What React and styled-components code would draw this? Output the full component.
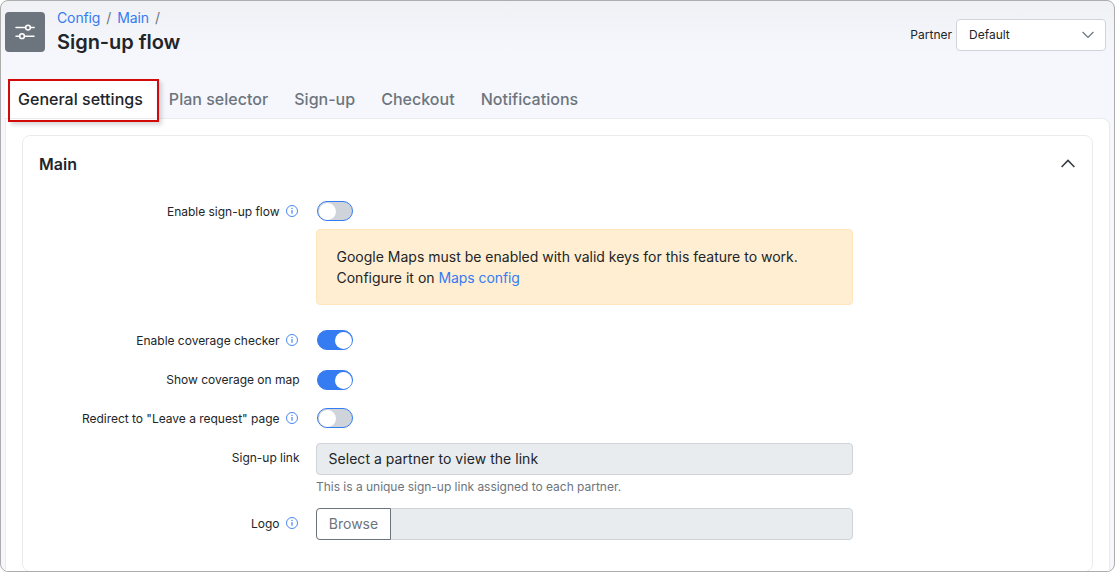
import { useState } from 'react';
import styled, { createGlobalStyle } from 'styled-components';

const tabs = ['General settings', 'Plan selector', 'Sign-up', 'Checkout', 'Notifications'];

const InfoIcon = () => (
  <InfoSvg viewBox='0 0 12 12' width='12' height='12' fill='none'>
    <circle cx='6' cy='6' r='5.5' stroke='#357bf2' strokeWidth='0.9' />
    <path d='M6 5v3.8' stroke='#357bf2' strokeWidth='1.1' />
    <circle cx='6' cy='3.4' r='0.7' fill='#357bf2' />
  </InfoSvg>
);

const SlidersIcon = () => (
  <svg viewBox='0 0 20 18' width='20' height='18' fill='none' stroke='#fff' strokeWidth='1.5'>
    <path d='M1 4.6h9.6M15.4 4.6h3.8M1 13.2h3.8M9.4 13.2h9.6' strokeLinecap='round' />
    <circle cx='13' cy='4.6' r='2.4' />
    <circle cx='7' cy='13.2' r='2.4' />
  </svg>
);

const Field = ({ label, info, top, labelTop, children }) => (
  <Row $top={top}>
    <Label $top={labelTop}>
      {label}
      {info && <InfoIcon />}
    </Label>
    <Control>{children}</Control>
  </Row>
);

function App() {
  const [active, setActive] = useState(tabs[0]);
  const [values, setValues] = useState({ flow: false, coverage: true, map: true, redirect: false });

  const toggle = (name) => {
    setValues({ ...values, [name]: !values[name] });
  };

  return (
    <>
      <GlobalStyle />
      <Frame>
        <Header>
          <PageIcon>
            <SlidersIcon />
          </PageIcon>
          <Heading>
            <Breadcrumb>
              <a>Config</a>
              <span>/</span>
              <a>Main</a>
              <span>/</span>
            </Breadcrumb>
            <Title>Sign-up flow</Title>
          </Heading>
          <Partner>
            <span>Partner</span>
            <Select>
              <span>Default</span>
              <svg width='12' height='8' viewBox='0 0 12 8' fill='none' stroke='#6b747b' strokeWidth='1.2'>
                <path d='M0.6 1l5.4 5.5L11.4 1' />
              </svg>
            </Select>
          </Partner>
        </Header>

        <Tabs>
          {tabs.map((tab) => (
            <Tab key={tab} $active={tab === active} onClick={() => setActive(tab)}>
              {tab}
            </Tab>
          ))}
          <Highlight />
        </Tabs>

        <Panel>
          <Card>
            <CardHeader>
              Main
              <svg width='14' height='9' viewBox='0 0 14 9' fill='none' stroke='#343a40' strokeWidth='1.5'>
                <path d='M0.6 8L7 1.4 13.4 8' />
              </svg>
            </CardHeader>

            <Field label='Enable sign-up flow' info top={18} labelTop={2}>
              <Switch $on={values.flow} onClick={() => toggle('flow')} />
              <Alert>
                Google Maps must be enabled with valid keys for this feature to work.
                <br />
                Configure it on <a>Maps config</a>
              </Alert>
            </Field>
            <Field label='Enable coverage checker' info top={25} labelTop={2}>
              <Switch $on={values.coverage} onClick={() => toggle('coverage')} />
            </Field>
            <Field label='Show coverage on map' top={20} labelTop={1}>
              <Switch $on={values.map} onClick={() => toggle('map')} />
            </Field>
            <Field label='Redirect to "Leave a request" page' info top={18} labelTop={2}>
              <Switch $on={values.redirect} onClick={() => toggle('redirect')} />
            </Field>
            <Field label='Sign-up link' top={15} labelTop={6}>
              <LinkBox>Select a partner to view the link</LinkBox>
              <Help>This is a unique sign-up link assigned to each partner.</Help>
            </Field>
            <Field label='Logo' info top={12} labelTop={7}>
              <FileBox>
                <Browse type='button'>Browse</Browse>
              </FileBox>
            </Field>
          </Card>
        </Panel>
      </Frame>
    </>
  );
}

const GlobalStyle = createGlobalStyle`
  * {
    box-sizing: border-box;
  }
  body {
    margin: 0;
    background: #fff;
    font-family: Inter, 'Liberation Sans', sans-serif;
    color: #212529;
  }
  a {
    color: #357bf2;
    cursor: pointer;
  }
`;

const Frame = styled.div`
  display: flex;
  flex-direction: column;
  width: 1115px;
  height: 572px;
  padding: 0 4px;
  border: 1px solid #acacac;
  border-radius: 8px;
  background: linear-gradient(#f0f1f5, #f6f7fc 55px);
  overflow: hidden;
`;

const Header = styled.header`
  display: flex;
  flex-shrink: 0;
  height: 78px;
  padding: 11px 4px 0 0;
`;

const PageIcon = styled.div`
  display: flex;
  align-items: center;
  justify-content: center;
  width: 40px;
  height: 40px;
  border-radius: 4px;
  background: #6c757d;
`;

const Heading = styled.div`
  flex: 1;
  padding-left: 12px;
`;

const Breadcrumb = styled.nav`
  display: flex;
  gap: 6px;
  margin-top: -5px;
  font-size: 14px;
  line-height: 21px;
  letter-spacing: -0.12px;
  color: #6c757d;
`;

const Title = styled.h1`
  margin: 1px 0 0;
  font-size: 20px;
  font-weight: 600;
  line-height: 26px;
  letter-spacing: -0.04px;
`;

const Partner = styled.div`
  display: flex;
  align-items: center;
  gap: 4px;
  height: 32px;
  margin-top: 7px;
  font-size: 12px;

  span {
    padding-bottom: 1px;
  }
`;

const Select = styled.div`
  display: flex;
  align-items: center;
  justify-content: space-between;
  width: 150px;
  height: 32px;
  padding: 0 11px 0 12px;
  border: 1px solid #ced4da;
  border-radius: 4px;
  background: #fff;
`;

const Tabs = styled.div`
  position: relative;
  display: flex;
  flex-shrink: 0;
  height: 39px;
`;

const Tab = styled.div`
  padding: 0 13px;
  border-radius: 4px 4px 0 0;
  background: ${(props) => (props.$active ? '#fff' : 'transparent')};
  color: ${(props) => (props.$active ? '#212529' : '#6c757d')};
  font-size: 16px;
  font-weight: 500;
  line-height: 41px;
  letter-spacing: 0.02px;
  white-space: nowrap;
  cursor: pointer;
`;

const Highlight = styled.div`
  position: absolute;
  z-index: 1;
  top: 0;
  left: 3px;
  width: 151px;
  height: 43px;
  border: 2px solid #d20a0a;
  box-shadow: 3px 3px 4px rgba(0, 0, 0, 0.15);
  pointer-events: none;
`;

const Panel = styled.main`
  flex: 1;
  min-height: 0;
  padding: 16px 16px 0;
  border: 1px solid #e9ecef;
  border-bottom: 0;
  border-radius: 0 8px 0 0;
  background: #fff;
`;

const Card = styled.section`
  height: 437px;
  border: 1px solid #e9ecef;
  border-radius: 8px;
`;

const CardHeader = styled.div`
  display: flex;
  align-items: center;
  justify-content: space-between;
  height: 47px;
  padding: 8px 17px 0 16px;
  font-size: 16px;
  font-weight: 600;
`;

const Row = styled.div`
  display: flex;
  gap: 16.5px;
  margin-top: ${(props) => props.$top}px;
`;

const Label = styled.div`
  display: flex;
  justify-content: flex-end;
  width: 276.5px;
  padding-top: ${(props) => props.$top}px;
  font-size: 12px;
  line-height: 18px;
  letter-spacing: -0.02px;
  white-space: nowrap;
`;

const InfoSvg = styled.svg`
  margin: 2px 2px 0 6px;
`;

const Control = styled.div`
  width: 537px;
`;

const Switch = styled.div`
  display: flex;
  align-items: center;
  justify-content: ${(props) => (props.$on ? 'flex-end' : 'flex-start')};
  width: 36px;
  height: 20px;
  margin-left: 1px;
  padding: 0 0.5px;
  border: 1px solid #357bf2;
  border-radius: 10px;
  background: ${(props) => (props.$on ? '#357bf2' : '#ced4da')};
  cursor: pointer;

  &::after {
    content: '';
    width: 17px;
    height: 17px;
    border-radius: 50%;
    background: #fff;
  }
`;

const Alert = styled.div`
  height: 76px;
  margin-top: 8px;
  padding: 16px 19.5px;
  border: 1px solid #ffe5b9;
  border-radius: 4px;
  background: #ffeed1;
  font-size: 14px;
  line-height: 21px;

  a {
    letter-spacing: -0.08px;
  }
`;

const LinkBox = styled.div`
  height: 32px;
  padding-left: 11.5px;
  border: 1px solid #ced4da;
  border-radius: 4px;
  background: #e9ecef;
  font-size: 14px;
  line-height: 30px;
  letter-spacing: 0.04px;
`;

const Help = styled.div`
  margin-top: 3px;
  font-size: 12px;
  line-height: 18px;
  letter-spacing: -0.02px;
  color: #6c757d;
`;

const FileBox = styled.div`
  display: flex;
  height: 32px;
  border: 1px solid #ced4da;
  border-radius: 4px;
  background: #e9ecef;
`;

const Browse = styled.button`
  width: 75px;
  height: 32px;
  margin: -1px;
  padding: 0 0 1px;
  border: 1px solid #6c757d;
  border-radius: 4px 0 0 4px;
  background: #fff;
  color: #6c757d;
  font-family: inherit;
  font-size: 14px;
`;

export default App;
